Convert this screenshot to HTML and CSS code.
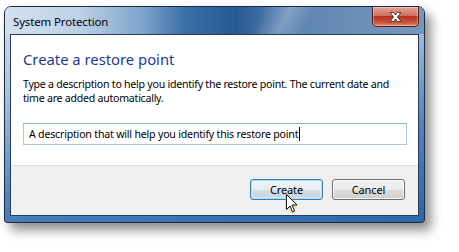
FILE: index.html
```html
<!DOCTYPE html>
<html lang="en">
<head>
    <meta charset="UTF-8">
    <title>System Protection</title>
    <link rel="stylesheet" href="styles.css">
</head>
<body>
    <div class="window">
        <div class="titlebar">
            <span class="title">System Protection</span>
            <div class="close-btn">
                <svg width="17" height="12" viewBox="0 0 17 12">
                    <path d="M3 1.5 L6.5 1.5 L8.5 4 L10.5 1.5 L14 1.5 L10.5 6 L14 10.5 L10.5 10.5 L8.5 8 L6.5 10.5 L3 10.5 L6.5 6 Z"
                          fill="#ffffff" stroke="#4a3a3a" stroke-width="1" stroke-linejoin="round"/>
                </svg>
            </div>
        </div>
        <div class="frame">
            <div class="client">
                <div class="content">
                    <h1 class="heading">Create a restore point</h1>
                    <p class="desc">Type a description to help you identify the restore point. The current date and time are added automatically.</p>
                    <div class="textbox">A description that will help you identify this restore point<span class="caret"></span></div>
                </div>
                <div class="footer">
                    <button class="btn btn-default">Create</button>
                    <button class="btn">Cancel</button>
                    <svg class="pointer" width="14" height="22" viewBox="0 0 14 22">
                        <path d="M1.5 1.5 L1.5 16.5 L5 13 L7.5 19 L9.5 18 L7 12 L12 12 Z"
                              fill="#ffffff" stroke="#1a1a1a" stroke-width="1" stroke-linejoin="round"
                              style="filter: drop-shadow(0 0 1.2px #cdb84e)"/>
                    </svg>
                </div>
            </div>
        </div>
    </div>
</body>
</html>
```

FILE: styles.css
```css
* {
    margin: 0;
    padding: 0;
    box-sizing: border-box;
}

body {
    font-family: 'Noto Sans', 'Open Sans', sans-serif;
    background: #ffffff;
    width: 459px;
    height: 252px;
    overflow: hidden;
}

.window {
    margin: 6px 0 0 4px;
    width: 421px;
    height: 217px;
    border: 1px solid #1c2b3d;
    border-radius: 7px 7px 3px 3px;
    background: linear-gradient(170deg, #d5e2f0 0%, #a9c3e0 30%, #4f86c2 65%, #2a66a8 100%);
    box-shadow: 6px 7px 11px rgba(0, 0, 0, 0.45);
    display: flex;
    flex-direction: column;
    overflow: hidden;
}

.titlebar {
    height: 27px;
    display: flex;
    align-items: flex-start;
    justify-content: space-between;
    padding-left: 8px;
    padding-right: 5px;
    background:
        linear-gradient(115deg, rgba(255,255,255,0) 60%, rgba(255,255,255,0.25) 66%, rgba(255,255,255,0) 72%),
        linear-gradient(90deg, #d3e1ef 0%, #bcd0e6 18%, #7ea3cc 33%, #3a6ea6 43%, #265a93 55%, #5b83b1 68%, #6d8fb7 85%, #7895ba 100%);
}

.title {
    font-size: 11.4px;
    letter-spacing: -0.1px;
    line-height: 14px;
    margin-top: 8px;
    color: #000000;
}

.close-btn {
    width: 47px;
    height: 20px;
    border: 1px solid #4b1e1a;
    border-top: none;
    border-radius: 0 0 5px 5px;
    background: linear-gradient(to bottom, #e0a597 0%, #d26f5f 45%, #b8321f 50%, #c8503a 80%, #e28d6e 100%);
    box-shadow: inset 0 0 0 1px rgba(255, 255, 255, 0.35);
    display: flex;
    align-items: center;
    justify-content: center;
}

.frame {
    flex: 1;
    padding: 0 5px 6px 5px;
}

.client {
    height: 182px;
    border: 1px solid #2b3b52;
    display: flex;
    flex-direction: column;
    background: #ffffff;
}

.content {
    height: 131px;
    padding: 14px 8px 0 12px;
    border-bottom: 1px solid #dfdfdf;
}

.heading {
    font-size: 14.8px;
    font-weight: normal;
    color: #1e3a99;
    line-height: 20px;
    margin-bottom: 8px;
}

.desc {
    font-size: 10.6px;
    letter-spacing: -0.25px;
    line-height: 14px;
    color: #000000;
    margin-bottom: 18px;
}

.textbox {
    height: 22px;
    width: 384px;
    border: 1px solid #a9c8e0;
    border-top-color: #93b4d0;
    font-size: 10.6px;
    letter-spacing: -0.2px;
    line-height: 20px;
    padding-left: 5px;
    color: #000000;
    display: flex;
    align-items: center;
    white-space: nowrap;
}

.caret {
    display: inline-block;
    width: 1px;
    height: 14px;
    background: #000000;
    margin-left: 1px;
}

.footer {
    flex: 1;
    background: #f0f0f0;
    display: flex;
    justify-content: flex-end;
    align-items: flex-start;
    gap: 9px;
    padding: 13px 13px 0 0;
    position: relative;
}

.btn {
    width: 73px;
    height: 21px;
    font-family: inherit;
    font-size: 11px;
    letter-spacing: -0.1px;
    color: #000000;
    border: 1px solid #707070;
    border-radius: 3px;
    background: linear-gradient(to bottom, #f2f2f2 0%, #ebebeb 50%, #dddddd 51%, #cfcfcf 100%);
    box-shadow: inset 0 0 0 1px rgba(255, 255, 255, 0.8);
}

.btn-default {
    border-color: #3c7fb1;
    background: linear-gradient(to bottom, #f0f4f7 0%, #e6ecf1 50%, #d6dee6 51%, #c8d2dc 100%);
    box-shadow: inset 0 0 0 1px #9fe0fb, inset 0 0 0 2px rgba(255, 255, 255, 0.4);
}

.pointer {
    position: absolute;
    left: 274px;
    top: 27px;
}
```
